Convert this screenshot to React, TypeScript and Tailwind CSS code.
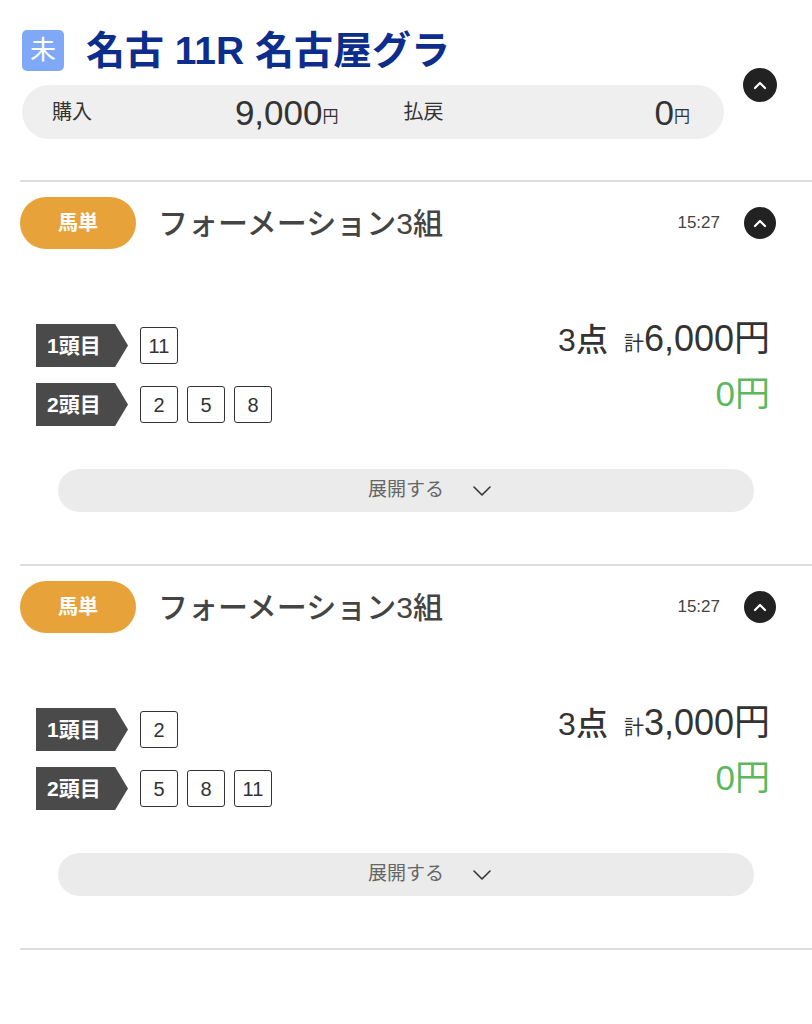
import React from 'react'

const font = { fontFamily: '"Liberation Sans", "Noto Sans CJK JP", sans-serif' }

function ChevronCircle({ size = 'w-[34px] h-[34px]' }: { size?: string }) {
  return (
    <div className={`${size} rounded-full bg-[#222222] flex items-center justify-center shrink-0`}>
      <svg width="14" height="10" viewBox="0 0 14 10" fill="none">
        <path d="M2 8 L7 3 L12 8" stroke="white" strokeWidth="2.2" strokeLinecap="round" strokeLinejoin="round" />
      </svg>
    </div>
  )
}

function Label({ text }: { text: string }) {
  return (
    <div className="w-[92px] h-[43px] bg-[#4a4a4a] flex items-center pl-[11px] text-white font-bold text-[21px] [clip-path:polygon(0_0,86%_0,100%_50%,86%_100%,0_100%)]">
      {text}
    </div>
  )
}

function NumBox({ n }: { n: string }) {
  return (
    <div className="w-[38px] h-[37px] border-[1.5px] border-[#333333] rounded-[3px] flex items-center justify-center text-[20px] text-[#333333]">
      {n}
    </div>
  )
}

type Bet = { first: string[]; second: string[]; total: string }

function Section({ bet }: { bet: Bet }) {
  return (
    <div>
      <div className="ml-[20px] h-[2px] bg-[#dedede]" />
      <div className="pl-[20px] pr-[36px] pt-[15px] flex items-center">
        <div className="w-[116px] h-[52px] rounded-full bg-[#e8a23a] text-white font-bold text-[20px] flex items-center justify-center">
          馬単
        </div>
        <div className="ml-[22px] text-[30px] font-medium text-[#444444]">フォーメーション3組</div>
        <div className="ml-auto mr-[24px] text-[17px] text-[#444444]">15:27</div>
        <ChevronCircle size="w-[32px] h-[32px]" />
      </div>
      <div className="pl-[36px] pr-[42px] mt-[75px] flex justify-between">
        <div className="flex flex-col gap-[16px]">
          <div className="flex items-center gap-[12px]">
            <Label text="1頭目" />
            <div className="flex gap-[9px]">
              {bet.first.map(n => <NumBox key={n} n={n} />)}
            </div>
          </div>
          <div className="flex items-center gap-[12px]">
            <Label text="2頭目" />
            <div className="flex gap-[9px]">
              {bet.second.map(n => <NumBox key={n} n={n} />)}
            </div>
          </div>
        </div>
        <div className="flex flex-col items-end -mt-[9px]">
          <div className="flex items-baseline text-[#333333] leading-[48px]">
            <span className="text-[32px] font-medium">3点</span>
            <span className="text-[20px] ml-[16px]">計</span>
            <span className="text-[36px]">{bet.total}円</span>
          </div>
          <div className="text-[35px] text-[#5cb85c] leading-[44px] mt-[4px]">0円</div>
        </div>
      </div>
      <div className="mt-[43px] mx-[58px] h-[43px] rounded-full bg-[#ebebeb] flex items-center justify-center">
        <span className="relative text-[19px] text-[#666666]">
          展開する
          <svg className="absolute left-[calc(100%+28px)] top-1/2 -translate-y-1/2" width="20" height="12" viewBox="0 0 20 12" fill="none">
            <path d="M2 2 L10 10 L18 2" stroke="#333333" strokeWidth="1.6" strokeLinecap="round" strokeLinejoin="round" />
          </svg>
        </span>
      </div>
      <div className="h-[52px]" />
    </div>
  )
}

export default function App() {
  const bets: Bet[] = [
    { first: ['11'], second: ['2', '5', '8'], total: '6,000' },
    { first: ['2'], second: ['5', '8', '11'], total: '3,000' },
  ]
  return (
    <div className="w-[812px] min-h-[1024px] bg-white" style={font}>
      <div className="pl-[22px] pt-[30px] flex items-center">
        <div className="w-[702px]">
          <div className="flex items-center h-[41px]">
            <div className="w-[42px] h-[41px] rounded-[5px] bg-[#7fa9f7] text-white text-[26px] flex items-center justify-center">未</div>
            <div className="ml-[22px] text-[39px] font-bold text-[#0d2d8c] leading-none">名古 11R 名古屋グラ</div>
          </div>
          <div className="mt-[14px] h-[54px] rounded-full bg-[#efefef] flex items-center text-[#333333]">
            <div className="flex-1 flex items-center pl-[30px] pr-[35px]">
              <span className="text-[20px]">購入</span>
              <span className="ml-auto text-[35px] font-medium leading-none">9,000</span>
              <span className="text-[16px] mt-[10px]">円</span>
            </div>
            <div className="flex-1 flex items-center pl-[30px] pr-[34px]">
              <span className="text-[20px]">払戻</span>
              <span className="ml-auto text-[35px] font-medium leading-none">0</span>
              <span className="text-[16px] mt-[10px]">円</span>
            </div>
          </div>
        </div>
        <div className="ml-[19px]">
          <ChevronCircle />
        </div>
      </div>
      <div className="h-[41px]" />
      {bets.map((b, i) => <Section key={i} bet={b} />)}
      <div className="ml-[20px] h-[2px] bg-[#dedede]" />
    </div>
  )
}
